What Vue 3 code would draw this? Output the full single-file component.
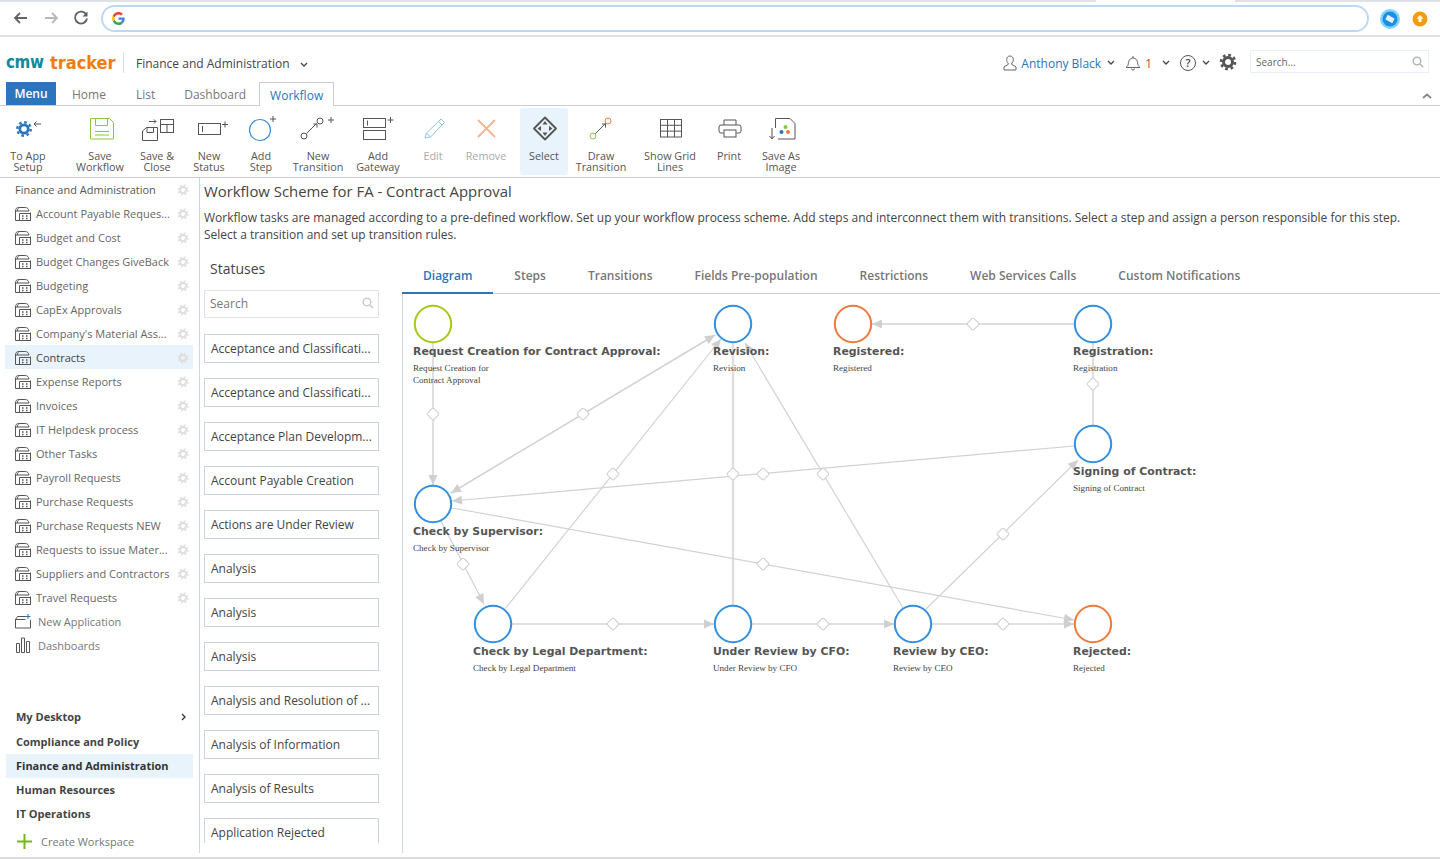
<script setup>
const apps = ['Account Payable Reques...','Budget and Cost','Budget Changes GiveBack','Budgeting','CapEx Approvals',"Company's Material Ass...",'Contracts','Expense Reports','Invoices','IT Helpdesk process','Other Tasks','Payroll Requests','Purchase Requests','Purchase Requests NEW','Requests to issue Mater...','Suppliers and Contractors','Travel Requests']
const workspaces = ['Compliance and Policy','Finance and Administration','Human Resources','IT Operations']
const statuses = ['Acceptance and Classificati...','Acceptance and Classificati...','Acceptance Plan Developm...','Account Payable Creation','Actions are Under Review','Analysis','Analysis','Analysis','Analysis and Resolution of ...','Analysis of Information','Analysis of Results','Application Rejected']
const tabs = ['Diagram','Steps','Transitions','Fields Pre-population','Restrictions','Web Services Calls','Custom Notifications']
const ribbon = [
  { id:'setup', w:56, lines:['To App','Setup'] },
  { id:'save', w:60, lines:['Save','Workflow'] },
  { id:'close', w:54, lines:['Save &','Close'] },
  { id:'status', w:50, lines:['New','Status'] },
  { id:'step', w:54, lines:['Add','Step'] },
  { id:'trans', w:60, lines:['New','Transition'] },
  { id:'gate', w:60, lines:['Add','Gateway'] },
  { id:'edit', w:50, lines:['Edit'], off:true },
  { id:'remove', w:56, lines:['Remove'], off:true },
  { id:'select', w:48, lines:['Select'], on:true },
  { id:'draw', w:66, lines:['Draw','Transition'] },
  { id:'grid', w:72, lines:['Show Grid','Lines'] },
  { id:'print', w:46, lines:['Print'] },
  { id:'image', w:58, lines:['Save As','Image'] }
]
// Diagram coordinates are relative to the canvas, whose origin is page (403, 294)
const ox = 403, oy = 294
const nodes = [
  { x:433, y:324, c:'#a5c916', t:'Request Creation for Contract Approval:', s:['Request Creation for','Contract Approval'] },
  { x:733, y:324, c:'#3390e0', t:'Revision:', s:['Revision'] },
  { x:853, y:324, c:'#ee7a3c', t:'Registered:', s:['Registered'] },
  { x:1093, y:324, c:'#3390e0', t:'Registration:', s:['Registration'] },
  { x:1093, y:444, c:'#3390e0', t:'Signing of Contract:', s:['Signing of Contract'] },
  { x:433, y:504, c:'#3390e0', t:'Check by Supervisor:', s:['Check by Supervisor'] },
  { x:493, y:624, c:'#3390e0', t:'Check by Legal Department:', s:['Check by Legal Department'] },
  { x:733, y:624, c:'#3390e0', t:'Under Review by CFO:', s:['Under Review by CFO'] },
  { x:913, y:624, c:'#3390e0', t:'Review by CEO:', s:['Review by CEO'] },
  { x:1093, y:624, c:'#ee7a3c', t:'Rejected:', s:['Rejected'] }
]
const edges = [
  { a:[433,343], b:[433,485], w:2, end:true },
  { a:[451,493], b:[715,335], w:1.5, end:true, start:true },
  { a:[505,609], b:[721,339], w:1.2, end:true },
  { a:[733,605], b:[733,343], w:2.4 },
  { a:[903,608], b:[745,343], w:1.2, end:true },
  { a:[1074,324], b:[872,324], w:2.2, end:true },
  { a:[1093,343], b:[1093,425], w:2 },
  { a:[1074,446], b:[452,501], w:1.2, end:true },
  { a:[452,508], b:[1074,620], w:1.2, end:true },
  { a:[441,521], b:[484,604], w:1.2, end:true },
  { a:[512,624], b:[714,624], w:2.2, end:true },
  { a:[752,624], b:[894,624], w:2.2, end:true },
  { a:[932,624], b:[1074,624], w:2.2, end:true },
  { a:[925,610], b:[1078,460], w:1.2, end:true }
].map(e => {
  const dx = e.b[0]-e.a[0], dy = e.b[1]-e.a[1], l = Math.hypot(dx,dy), ux = dx/l, uy = dy/l
  const head = (p, vx, vy) => {
    const bx = p[0]-vx*10, by = p[1]-vy*10
    return `${p[0]-ox},${p[1]-oy} ${bx-vy*4.5-ox},${by+vx*4.5-oy} ${bx+vy*4.5-ox},${by-vx*4.5-oy}`
  }
  return { ...e, col: e.w >= 2 ? '#dfdfdf' : '#d2d2d2', x1:e.a[0]-ox, y1:e.a[1]-oy, x2:e.b[0]-ox, y2:e.b[1]-oy,
    endHead: e.end ? head(e.b,ux,uy) : null, startHead: e.start ? head(e.a,-ux,-uy) : null }
})
const diamonds = [[433,414],[583,414],[613,474],[733,474],[763,474],[823,474],[973,324],[1093,384],[1003,534],[763,564],[463,564],[613,624],[823,624],[1003,624]]
</script>

<template>
  <div class="page">
    <div class="browser">
      <div class="tabstrip"><span class="activetab"></span></div>
      <div class="browserbar">
        <svg class="nav" width="90" height="24" viewBox="0 0 90 24" fill="none">
          <path d="M17 12H5M10 7l-5 5 5 5" stroke="#5f6368" stroke-width="1.800"/>
          <path d="M35 12h12M42 7l5 5-5 5" stroke="#b5b8bc" stroke-width="1.800"/>
          <path d="M76.500 9a6 6 0 1 0 .5 3.500" stroke="#5f6368" stroke-width="1.800"/>
          <path d="M77.500 5.500v5h-5z" fill="#5f6368"/>
        </svg>
        <div class="omnibox">
          <svg width="13" height="13" viewBox="0 0 24 24">
            <path d="M23.500 12.300c0-.9-.1-1.600-.2-2.300H12v4.500h6.500c-.3 1.500-1.100 2.700-2.400 3.500l3.700 2.900c2.200-2 3.700-5 3.700-8.600z" fill="#4285f4"/>
            <path d="M12 24c3.200 0 6-1.100 7.900-2.900L16.200 18.100c-1 .7-2.400 1.100-4.200 1.100-3.200 0-5.800-2.100-6.800-5L1.400 17.200C3.300 21.200 7.300 24 12 24z" fill="#34a853"/>
            <path d="M5.200 14.300c-.5-1.500-.5-3.100 0-4.600L1.400 6.800c-1.600 3.200-1.600 7.200 0 10.400z" fill="#fbbc05"/>
            <path d="M12 4.800c1.800 0 3.300.6 4.600 1.800l3.400-3.400C17.900 1.200 15.200 0 12 0 7.300 0 3.300 2.800 1.400 6.800l3.800 2.900c1-2.900 3.600-4.900 6.800-4.900z" fill="#ea4335"/>
          </svg>
        </div>
        <svg class="ext" width="60" height="24" viewBox="0 0 60 24">
          <circle cx="10" cy="12" r="10" fill="#7fd4fb"/>
          <circle cx="10" cy="12" r="7.500" fill="#1c8fe3"/>
          <rect x="6" y="9.500" width="8" height="5" transform="rotate(30 10 12)" fill="#e4f3fd"/>
          <circle cx="40" cy="12" r="7.500" fill="#f59c0c"/>
          <path d="M40 8l3.500 3.500h-2v3.500h-3v-3.500h-2z" fill="#fff"/>
        </svg>
      </div>
    </div>

    <header class="appheader">
      <div class="logo"><span class="cmw">cmw</span><span class="tracker">tracker</span></div>
      <div class="wsname">Finance and Administration</div>
      <svg class="chev wschev" width="8" height="5" viewBox="0 0 8 5"><path d="M1 1l3 3 3-3" fill="none" stroke="#444" stroke-width="1.300"/></svg>
      <div class="right">
        <svg width="14" height="16" viewBox="0 0 14 16" fill="none" stroke="#666" stroke-width="1"><path d="M7 1c-2.200 0-3.300 1.600-3.300 3.500 0 1.600.6 2.800 1.500 3.600v1.400L1 11.800V15h12v-3.200L8.800 9.500V8.100c.9-.8 1.500-2 1.500-3.600C10.300 2.600 9.200 1 7 1z"/></svg>
        <span class="user">Anthony Black</span>
        <svg class="chev c1" width="8" height="5" viewBox="0 0 8 5"><path d="M1 1l3 3 3-3" fill="none" stroke="#444" stroke-width="1.300"/></svg>
        <svg class="bell" width="16" height="16" viewBox="0 0 16 16" fill="none" stroke="#666" stroke-width="1"><path d="M1 12.500c1.500-1.200 2.300-2.500 2.500-5 .2-2.500 1.800-4.500 4.500-4.500s4.300 2 4.500 4.500c.2 2.500 1 3.800 2.500 5zM8 1v2M6.500 13.500a1.500 1.500 0 0 0 3 0"/></svg>
        <span class="count">1</span>
        <svg class="chev c2" width="8" height="5" viewBox="0 0 8 5"><path d="M1 1l3 3 3-3" fill="none" stroke="#444" stroke-width="1.300"/></svg>
        <span class="help">?</span>
        <svg class="chev c3" width="8" height="5" viewBox="0 0 8 5"><path d="M1 1l3 3 3-3" fill="none" stroke="#444" stroke-width="1.300"/></svg>
        <svg class="bigear" width="18" height="18" viewBox="0 0 18 18" fill="none" stroke="#555">
          <circle cx="9" cy="9" r="4.500" stroke-width="3"/>
          <circle cx="9" cy="9" r="7" stroke-width="2.600" stroke-dasharray="2.750 2.750"/>
        </svg>
        <div class="topsearch">
          <span>Search...</span>
          <svg width="12" height="12" viewBox="0 0 12 12" fill="none" stroke="#b5b5b5" stroke-width="1.500"><circle cx="5" cy="5" r="3.800"/><path d="M8 8l3.200 3.200"/></svg>
        </div>
      </div>
    </header>

    <nav class="tabs">
      <span class="menu">Menu</span>
      <span class="tab home">Home</span>
      <span class="tab list">List</span>
      <span class="tab dash">Dashboard</span>
      <span class="tab active">Workflow</span>
      <svg class="collapse" width="10" height="6" viewBox="0 0 10 6"><path d="M1 5l4-3.500L9 5" fill="none" stroke="#888" stroke-width="1.800"/></svg>
    </nav>

    <section class="ribbon">
      <div v-for="r in ribbon" :key="r.id" class="ritem" :class="['r-' + r.id, { off:r.off, on:r.on }]" :style="{ width: r.w + 'px' }">
        <svg class="ricon" width="44" height="36" viewBox="0 0 44 36" fill="none" stroke="#555" stroke-width="1">
          <g v-if="r.id==='setup'">
            <circle cx="18" cy="17" r="4.200" stroke="#2a75bb" stroke-width="2.800"/>
            <circle cx="18" cy="17" r="6.700" stroke="#2a75bb" stroke-width="2.400" stroke-dasharray="2.630 2.630"/>
            <path d="M35 12h-7M30.500 9.500L28 12l2.500 2.500"/>
          </g>
          <g v-else-if="r.id==='save'" stroke="#8cc63f">
            <path d="M12.500 6.500h19l4 4v16.500h-23z"/>
            <path d="M17.500 6.500v7h12v-7M17 19.500h14M17 23h14"/>
          </g>
          <g v-else-if="r.id==='close'">
            <path d="M7.500 19l4-3.500h11v13h-15z"/>
            <path d="M12 15.500v5h6.500v-5"/>
            <rect x="25.500" y="7.500" width="13" height="13"/>
            <path d="M25.500 12.500h13M32 12.500v8M14 9.500h7M19 7.500l2 2-2 2"/>
          </g>
          <g v-else-if="r.id==='status'">
            <rect x="11.500" y="11.500" width="22" height="11"/>
            <path d="M15.500 14v6M38 9.500v6M35 12.500h6"/>
          </g>
          <g v-else-if="r.id==='step'">
            <circle cx="21" cy="18" r="10.500" stroke="#3b8fd9" stroke-width="1.200"/>
            <path d="M34 4v6M31 7h6"/>
          </g>
          <g v-else-if="r.id==='trans'">
            <circle cx="8" cy="24" r="3"/>
            <circle cx="24" cy="9" r="3"/>
            <path d="M10.500 21.500l10-10M17.500 12h3.500v3.500M35 5v6M32 8h6"/>
          </g>
          <g v-else-if="r.id==='gate'">
            <rect x="7.500" y="6.500" width="22" height="9"/>
            <rect x="7.500" y="18.500" width="22" height="9"/>
            <path d="M11.500 8.500v5M34.500 5v6M31.500 8h6"/>
          </g>
          <g v-else-if="r.id==='edit'" stroke="#8dbfe6">
            <path d="M14 26l1.500-5L30 7l3.500 3.500-14 14.500zM15.500 21l4 4M27.500 9.500l3.500 3.500"/>
          </g>
          <g v-else-if="r.id==='remove'" stroke="#f4b393" stroke-width="1.800">
            <path d="M14 8l17 17M31 8L14 25"/>
          </g>
          <g v-else-if="r.id==='select'">
            <path d="M23 5.500l11 11-11 11-11-11z" stroke-width="1.800" stroke-linejoin="round"/>
            <path d="M23 9l-2.500 3.500h5zM23 24l-2.500-3.500h5zM15.500 16.500l3.500-2.500v5zM30.500 16.500l-3.500-2.500v5z" fill="#555" stroke="none"/>
          </g>
          <g v-else-if="r.id==='draw'">
            <circle cx="14" cy="24" r="3" stroke="#8cc63f"/>
            <circle cx="29" cy="9" r="3" stroke="#ee7a3c"/>
            <path d="M16.500 21.500l10-10M23 12h3.500v3.500"/>
          </g>
          <g v-else-if="r.id==='grid'">
            <rect x="12.500" y="7.500" width="21" height="17.500"/>
            <path d="M19.500 7.500v17.500M26.500 7.500v17.500M12.500 13.300h21M12.500 19.100h21"/>
          </g>
          <g v-else-if="r.id==='print'">
            <path d="M17 13V8h12v5M16.500 21h-2.500a2 2 0 0 1-2-2v-4a2 2 0 0 1 2-2h18a2 2 0 0 1 2 2v4a2 2 0 0 1-2 2h-2.500"/>
            <rect x="17" y="18" width="12" height="7"/>
          </g>
          <g v-else-if="r.id==='image'">
            <path d="M16.500 16V6.500h14.500l5 5v15.500H19"/>
            <path d="M13 16v10.500M10.500 24l2.500 3 2.500-3"/>
            <circle cx="26.500" cy="15" r="2" fill="#8cc63f" stroke="none"/>
            <circle cx="22.500" cy="20" r="2" fill="#2a75bb" stroke="none"/>
            <circle cx="29" cy="20" r="2" fill="#ee7a3c" stroke="none"/>
          </g>
        </svg>
        <span class="rlabel"><span v-for="l in r.lines" :key="l">{{ l }}</span></span>
      </div>
    </section>

    <div class="body">
      <aside class="side">
        <div class="siderow head">
          <span class="sidename">Finance and Administration</span>
          <svg class="sgear" width="12" height="12" viewBox="0 0 12 12" fill="none" stroke="#dedede"><circle cx="6" cy="6" r="3" stroke-width="1.800"/><circle cx="6" cy="6" r="4.700" stroke-width="1.600" stroke-dasharray="1.850 1.850"/></svg>
        </div>
        <div v-for="a in apps" :key="a" class="siderow" :class="{ cur: a==='Contracts' }">
          <svg class="appicon" width="16" height="15" viewBox="0 0 16 15" fill="none" stroke="#555" stroke-width="1">
            <path d="M.5 14.500V5c0-2 1-3.500 3-3.500h7c2 0 3 1.500 3.500 3.500H.5M4 1.500c-1 1-1.500 2-1.500 3.500M15.500 6.500v8H.5"/>
            <path d="M4.500 7.500h11v7h-11z"/>
            <path d="M7 10h1.500M11 10h1.500M7 12.500h1.500M11 12.500h1.500" stroke-width="1.400"/>
          </svg>
          <span class="sidename">{{ a }}</span>
          <svg class="sgear" width="12" height="12" viewBox="0 0 12 12" fill="none" stroke="#dedede"><circle cx="6" cy="6" r="3" stroke-width="1.800"/><circle cx="6" cy="6" r="4.700" stroke-width="1.600" stroke-dasharray="1.850 1.850"/></svg>
        </div>
        <div class="siderow extra">
          <svg class="appicon" width="16" height="16" viewBox="0 0 16 16" fill="none" stroke="#555"><path d="M.5 15V6.500l2-3h9M.5 6.500h10M15.500 7v8H.5"/><path d="M13 1v5M10.500 3.500h5" stroke="#2a75bb"/></svg>
          <span class="sidename soft">New Application</span>
        </div>
        <div class="siderow extra">
          <svg class="appicon" width="16" height="16" viewBox="0 0 16 16" fill="none" stroke="#555"><path d="M1.500 15.500v-9h3v9zM6.500 15.500V1h3v14.500zM11.500 15.500V4.500h3v11z"/></svg>
          <span class="sidename soft">Dashboards</span>
        </div>
        <div class="spacer"></div>
        <div class="ws mine"><span>My Desktop</span><svg width="5" height="8" viewBox="0 0 5 8"><path d="M1 1l3 3-3 3" fill="none" stroke="#333" stroke-width="1.300"/></svg></div>
        <div v-for="w in workspaces" :key="w" class="ws" :class="{ wscur: w==='Finance and Administration' }">{{ w }}</div>
        <div class="create">
          <svg width="15" height="15" viewBox="0 0 15 15"><path d="M7.500 0v15M0 7.500h15" stroke="#7ab51d" stroke-width="2"/></svg>
          <span>Create Workspace</span>
        </div>
      </aside>

      <main class="main">
        <h1>Workflow Scheme for FA - Contract Approval</h1>
        <p>Workflow tasks are managed according to a pre-defined workflow. Set up your workflow process scheme. Add steps and interconnect them with transitions. Select a step and assign a person responsible for this step. Select a transition and set up transition rules.</p>
        <div class="work">
          <div class="statuses">
            <h2>Statuses</h2>
            <div class="ssearch">
              <span>Search</span>
              <svg width="12" height="12" viewBox="0 0 12 12" fill="none" stroke="#ccc" stroke-width="1.500"><circle cx="5" cy="5" r="3.800"/><path d="M8 8l3.200 3.200"/></svg>
            </div>
            <div v-for="(s,i) in statuses" :key="i" class="status">{{ s }}</div>
          </div>
          <div class="panel">
            <div class="dtabs">
              <span v-for="t in tabs" :key="t" class="dtab" :class="{ dcur: t==='Diagram' }">{{ t }}</span>
            </div>
            <div class="canvas">
              <svg width="1037" height="559" viewBox="0 0 1037 559" fill="none">
                <g v-for="(e,i) in edges" :key="i">
                  <line :x1="e.x1" :y1="e.y1" :x2="e.x2" :y2="e.y2" :stroke="e.col" :stroke-width="e.w"/>
                  <polygon v-if="e.endHead" :points="e.endHead" fill="#cfcfcf"/>
                  <polygon v-if="e.startHead" :points="e.startHead" fill="#cfcfcf"/>
                </g>
                <rect v-for="(d,i) in diamonds" :key="'d'+i" :x="d[0]-ox-4.500" :y="d[1]-oy-4.500" width="9" height="9" rx="1.500" :transform="`rotate(45 ${d[0]-ox} ${d[1]-oy})`" fill="#fff" stroke="#cfcfcf" stroke-width="1"/>
                <g v-for="n in nodes" :key="n.t">
                  <circle :cx="n.x-ox" :cy="n.y-oy" r="18.200" fill="#fff" :stroke="n.c" stroke-width="2"/>
                  <text class="ntitle" :x="n.x-ox-20" :y="n.y-oy+31">{{ n.t }}</text>
                  <text v-for="(l,i) in n.s" :key="l" class="nsub" :x="n.x-ox-20" :y="n.y-oy+47+i*12">{{ l }}</text>
                </g>
              </svg>
            </div>
          </div>
        </div>
      </main>
    </div>
  </div>
</template>

<style>
html, body { margin: 0; background: #fff; }
</style>

<style scoped>
.page { width: 1440px; height: 859px; overflow: hidden; display: flex; flex-direction: column; font-family: "Open Sans", "Liberation Sans", sans-serif; color: #444; background: #fff; }
.browser { height: 37px; flex: none; border-bottom: 2px solid #dfe1e5; box-sizing: border-box; }
.tabstrip { height: 2px; background: #dee1e6; display: flex; padding-left: 1096px; }
.activetab { width: 139px; background: #fff; }
.browserbar { display: flex; align-items: center; height: 33px; padding-left: 10px; }
.nav { flex: none; margin-top: -1px; }
.omnibox { width: 1268px; height: 27px; margin-left: 1px; box-sizing: border-box; border: 2px solid #bcd8f5; border-radius: 14px; display: flex; align-items: center; padding-left: 9px; flex: none; }
.ext { margin-left: 11px; flex: none; }

.appheader { height: 45px; flex: none; display: flex; align-items: center; padding-left: 6px; padding-top: 6px; box-sizing: border-box; }
.logo { display: flex; gap: 6px; width: 118px; height: 21px; margin-top: -1px; align-items: center; border-right: 1px solid #ddd; font-family: "DejaVu Sans", sans-serif; font-weight: 700; font-size: 17px; line-height: 21px; letter-spacing: -.4px; box-sizing: border-box; }
.cmw { color: #0f8a9d; width: 38px; transform: scaleX(.89); transform-origin: left; }
.tracker { color: #ee7d11; font-size: 18px; letter-spacing: 0; white-space: nowrap; transform: scaleX(.9); transform-origin: left; }
.wsname { margin-left: 12px; margin-top: 2px; font-size: 12px; color: #444; }
.wschev { margin-left: 10px; margin-top: 3px; }
.right { margin-left: auto; display: flex; align-items: center; padding-right: 11px; }
.user { color: #2a75bb; font-size: 12px; margin-left: 4px; margin-top: 2px; }
.c1 { margin-left: 6px; }
.bell { margin-left: 10px; }
.count { color: #e8392c; font-size: 12px; margin-left: 4px; margin-top: 2px; }
.c2 { margin-left: 10px; }
.help { width: 16px; height: 16px; margin-left: 10px; border: 1px solid #555; border-radius: 50%; box-sizing: border-box; text-align: center; font-size: 11px; line-height: 14px; font-weight: 600; }
.c3 { margin-left: 6px; }
.bigear { margin-left: 9px; margin-top: -2px; }
.topsearch { width: 179px; height: 23px; margin-left: 13px; margin-top: -2px; box-sizing: border-box; border: 1px solid #e9eff6; display: flex; align-items: center; justify-content: space-between; padding: 0 4px 0 5px; font-size: 10px; color: #666; }

.tabs { height: 24px; flex: none; display: flex; align-items: flex-end; border-bottom: 1px solid #ccc; padding-left: 6px; position: relative; box-sizing: border-box; }
.menu { width: 50px; height: 23px; background: #2a75bb; color: #fff; font-size: 12px; font-weight: 600; text-align: center; line-height: 23px; }
.tab { font-size: 12px; color: #777; height: 23px; line-height: 25px; }
.home { margin-left: 16px; }
.list { margin-left: 30px; }
.dash { margin-left: 29px; }
.active { margin-left: 13px; width: 75px; height: 24px; margin-bottom: -1px; box-sizing: border-box; text-align: center; color: #2a75bb; background: #fff; border: 1px solid #ccc; border-bottom: 0; }
.collapse { position: absolute; right: 8px; top: 11px; }

.ribbon { height: 72px; flex: none; border-bottom: 1px solid #ccc; display: flex; box-sizing: border-box; padding-top: 2px; }
.ritem { height: 67px; display: flex; flex-direction: column; align-items: center; font-size: 10.800px; line-height: 11px; color: #555; flex: none; position: relative; border-radius: 3px; }
.ricon { margin-top: 4px; flex: none; }
.rlabel { display: flex; flex-direction: column; align-items: center; margin-top: 2px; white-space: nowrap; }
.off { color: #aaa; }
.on { background: #e8f3fb; }
.r-save { margin-left: 14px; }
.r-select { margin-left: 6px; }

.body { flex: 1; min-height: 0; display: flex; align-items: flex-start; border-bottom: 2px solid #ddd; box-sizing: border-box; }
.side { width: 199px; flex: none; box-sizing: border-box; padding: 0 6px 0 5px; margin-top: -1px; display: flex; flex-direction: column; height: 680px; }
.siderow { height: 24px; flex: none; display: flex; align-items: center; font-size: 11px; color: #666; padding-left: 10px; position: relative; }
.cur { background: #e8f3fb; color: #444; }
.head { color: #555; }
.appicon { flex: none; margin-right: 5px; }
.sidename { white-space: nowrap; }
.soft { color: #777; margin-left: 2px; }
.sgear { position: absolute; right: 4px; top: 7px; }
.spacer { flex: 1; }
.ws { height: 24px; flex: none; font-size: 11px; font-weight: 700; color: #444; line-height: 24px; padding-left: 11px; }
.mine { display: flex; align-items: center; justify-content: space-between; padding-right: 7px; margin-bottom: 1px; }
.wscur { background: #e8f3fb; color: #333; margin-left: 1px; padding-left: 10px; }
.create { height: 30px; flex: none; margin-top: 1px; padding: 0 0 2px 12px; box-sizing: border-box; display: flex; align-items: center; gap: 9px; font-size: 11px; color: #777; }

.main { flex: 1; min-width: 0; height: 675px; box-sizing: border-box; border-left: 1px solid #cfd6de; padding-left: 4px; display: flex; flex-direction: column; }
h1 { margin: 2px 0 0; font-size: 14.900px; font-weight: 400; color: #444; line-height: 22px; }
p { margin: 7px 0 0; font-size: 11.980px; line-height: 17px; color: #444; width: 1230px; }
.work { flex: 1; min-height: 0; display: flex; margin-top: 10px; }
.statuses { width: 175px; flex: none; height: 590px; overflow: hidden; }
h2 { margin: 0; padding: 6px 0 0 6px; height: 37px; box-sizing: border-box; font-size: 14px; font-weight: 400; color: #444; line-height: 20px; }
.ssearch { height: 28px; box-sizing: border-box; border: 1px solid #dde2e8; display: flex; align-items: center; justify-content: space-between; padding: 0 4px 2px 5px; font-size: 12px; color: #777; margin-bottom: 16px; }
.status { height: 29px; margin-bottom: 15px; box-sizing: border-box; border: 1px solid #cdd4dc; padding-left: 6px; font-size: 12px; line-height: 27px; color: #444; white-space: nowrap; overflow: hidden; }
.panel { margin-left: 23px; flex: 1; min-width: 0; display: flex; flex-direction: column; }
.dtabs { display: flex; height: 41px; box-sizing: border-box; border-bottom: 1px solid #ccc; flex: none; }
.dtab { padding: 14px 21px 0; font-size: 12px; font-weight: 600; color: #777; white-space: nowrap; line-height: 18px; margin-bottom: -1px; }
.dcur { color: #2a75bb; border-bottom: 2px solid #2a75bb; }
.canvas { flex: 1; min-height: 0; border-left: 1px solid #cfd6de; overflow: hidden; }
.canvas svg { display: block; }
.ntitle { font-family: "DejaVu Sans", sans-serif; font-weight: 700; font-size: 10.900px; fill: #555; }
.nsub { font-family: "Liberation Serif", serif; font-size: 9.100px; fill: #444; }
</style>
